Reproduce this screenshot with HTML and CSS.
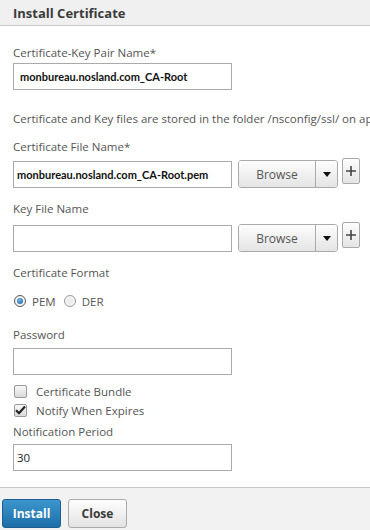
FILE: index.html
```html
<!DOCTYPE html>
<html lang="en">

<head>
    <link rel="stylesheet" href="styles.css">
</head>

<body>
    <div class="dialog">
        <div class="dialog-header">
            <h3>Install Certificate</h3>
        </div>
        <div class="dialog-body">
            <label class="field-label first">Certificate-Key Pair Name*</label>
            <input class="text-input bold" type="text" value="monbureau.nosland.com_CA-Root">

            <p class="info">Certificate and Key files are stored in the folder /nsconfig/ssl/ on appliance.</p>

            <label class="field-label tight">Certificate File Name*</label>
            <div class="file-row">
                <input class="text-input bold narrow" type="text" value="monbureau.nosland.com_CA-Root.pem">
                <div class="split-btn">
                    <button class="browse">Browse</button>
                    <button class="caret-btn"><span class="caret"></span></button>
                </div>
                <button class="plus-btn" aria-label="Add">
                    <svg width="10" height="10" viewBox="0 0 10 10"><path d="M5 0 V10 M0 5 H10" stroke="#444" stroke-width="1.6"/></svg>
                </button>
            </div>

            <label class="field-label">Key File Name</label>
            <div class="file-row">
                <input class="text-input" type="text" value="">
                <div class="split-btn">
                    <button class="browse">Browse</button>
                    <button class="caret-btn"><span class="caret"></span></button>
                </div>
                <button class="plus-btn" aria-label="Add">
                    <svg width="10" height="10" viewBox="0 0 10 10"><path d="M5 0 V10 M0 5 H10" stroke="#444" stroke-width="1.6"/></svg>
                </button>
            </div>

            <label class="field-label">Certificate Format</label>
            <div class="radio-row">
                <span class="radio checked"></span><span class="radio-text">PEM</span>
                <span class="radio"></span><span class="radio-text">DER</span>
            </div>

            <label class="field-label spaced">Password</label>
            <input class="text-input" type="password" value="">

            <div class="check-row first-check">
                <span class="checkbox"></span><span class="check-text">Certificate Bundle</span>
            </div>
            <div class="check-row">
                <span class="checkbox">
                    <svg width="11" height="10" viewBox="0 0 11 10"><path d="M1 5.2 L4 8.2 L10 1.5" fill="none" stroke="#222" stroke-width="2.2"/></svg>
                </span><span class="check-text">Notify When Expires</span>
            </div>

            <label class="field-label after-check">Notification Period</label>
            <input class="text-input" type="text" value="30">
        </div>
        <div class="dialog-footer">
            <button class="btn primary">Install</button>
            <button class="btn">Close</button>
        </div>
    </div>
</body>

</html>
```

FILE: styles.css
```css
body {
    font-family: "Open Sans", Arial, sans-serif;
    margin: 0;
    padding: 0;
    background-color: white;
    color: #555;
    font-size: 11.5px;
}

.dialog {
    width: 370px;
    height: 530px;
    display: flex;
    flex-direction: column;
    overflow: hidden;
}

.dialog-header {
    background-color: #f0f0f0;
    border-bottom: 1px solid #c8c8c8;
    height: 25px;
    padding-left: 13px;
    display: flex;
    align-items: center;
}

.dialog-header h3 {
    margin: 0;
    font-size: 13px;
    color: #3c3c3c;
    font-weight: bold;
}

.dialog-body {
    flex-grow: 1;
    padding-left: 13px;
    display: flex;
    flex-direction: column;
    align-items: flex-start;
}

.field-label {
    display: block;
    line-height: 16px;
    margin-top: 13px;
    margin-bottom: 5px;
    white-space: nowrap;
}

.field-label.first {
    margin-top: 19px;
    margin-bottom: 2px;
}

.field-label.tight {
    margin-top: 12px;
    margin-bottom: 3px;
}

.field-label.spaced {
    margin-top: 18px;
}

.field-label.after-check {
    margin-top: 6px;
    margin-bottom: 4px;
}

.info {
    margin: 21px 0 0;
    line-height: 16px;
    white-space: nowrap;
}

.text-input {
    box-sizing: border-box;
    width: 219px;
    height: 27px;
    border: 1px solid #aaa;
    padding: 0 3px;
    font-family: "Open Sans", Arial, sans-serif;
    font-size: 11.5px;
    color: #222;
    background: white;
    margin: 0;
}

.text-input.bold {
    font-family: Lato, "Open Sans", sans-serif;
    font-weight: bold;
    font-size: 11px;
    color: #111;
    padding-left: 6px;
}

.text-input.narrow {
    padding-left: 3px;
}

.file-row {
    display: flex;
    align-items: flex-end;
}

.split-btn {
    display: flex;
    margin-left: 6px;
    height: 28px;
    border: 1px solid #aaa;
    border-radius: 3px;
    box-sizing: border-box;
    overflow: hidden;
}

.split-btn button,
.plus-btn {
    font-family: "Open Sans", Arial, sans-serif;
    background: linear-gradient(#fdfdfd, #e4e4e4);
    border: none;
    margin: 0;
    padding: 0;
    color: #555;
    font-size: 12px;
}

.browse {
    width: 77px;
    border-right: 1px solid #aaa !important;
}

.caret-btn {
    width: 21px;
    display: flex;
    align-items: center;
    justify-content: center;
}

.caret {
    display: inline-block;
    border-left: 4px solid transparent;
    border-right: 4px solid transparent;
    border-top: 5px solid #111;
    margin-top: 1px;
}

.plus-btn {
    box-sizing: border-box;
    width: 18px;
    height: 26px;
    margin-left: 4px;
    margin-bottom: 4px;
    border: 1px solid #aaa;
    border-radius: 2px;
    display: flex;
    align-items: center;
    justify-content: center;
}

.radio-row {
    display: flex;
    align-items: center;
    height: 16px;
    margin-top: 7px;
}

.radio {
    box-sizing: border-box;
    width: 12px;
    height: 12px;
    border-radius: 50%;
    border: 1px solid #9a9a9a;
    background: radial-gradient(circle, #e8e8e8, #fafafa);
    margin-left: 1px;
    display: flex;
    align-items: center;
    justify-content: center;
}

.radio.checked::after {
    content: "";
    width: 6px;
    height: 6px;
    border-radius: 50%;
    background: radial-gradient(circle at 40% 35%, #6fb3e8, #1e5f96);
}

.radio.checked {
    border-color: #555;
}

.radio-text {
    margin-left: 6px;
    margin-right: 7px;
}

.check-row {
    display: flex;
    align-items: center;
    height: 16px;
    margin-top: 3px;
}

.check-row.first-check {
    margin-top: 8px;
}

.checkbox {
    box-sizing: border-box;
    width: 13px;
    height: 13px;
    border: 1px solid #999;
    border-radius: 2px;
    background: linear-gradient(#f8f8f8, #dadada);
    margin-left: 1px;
    display: flex;
    align-items: center;
    justify-content: center;
}

.check-text {
    margin-left: 9px;
}

.dialog-footer {
    height: 43px;
    border-top: 1px solid #c8c8c8;
    background-color: #f2f2f2;
    display: flex;
    align-items: flex-start;
    padding-top: 11px;
    padding-left: 2px;
    box-sizing: border-box;
}

.btn {
    font-family: "Open Sans", Arial, sans-serif;
    font-size: 12px;
    font-weight: bold;
    width: 59px;
    height: 29px;
    border: 1px solid #aaa;
    border-radius: 3px;
    background: linear-gradient(#fdfdfd, #e3e3e3);
    color: #3a3a3a;
    margin-right: 7px;
}

.btn.primary {
    background: linear-gradient(#3d96cf, #1d6ea8);
    border-color: #1a5f92;
    color: white;
}
```
